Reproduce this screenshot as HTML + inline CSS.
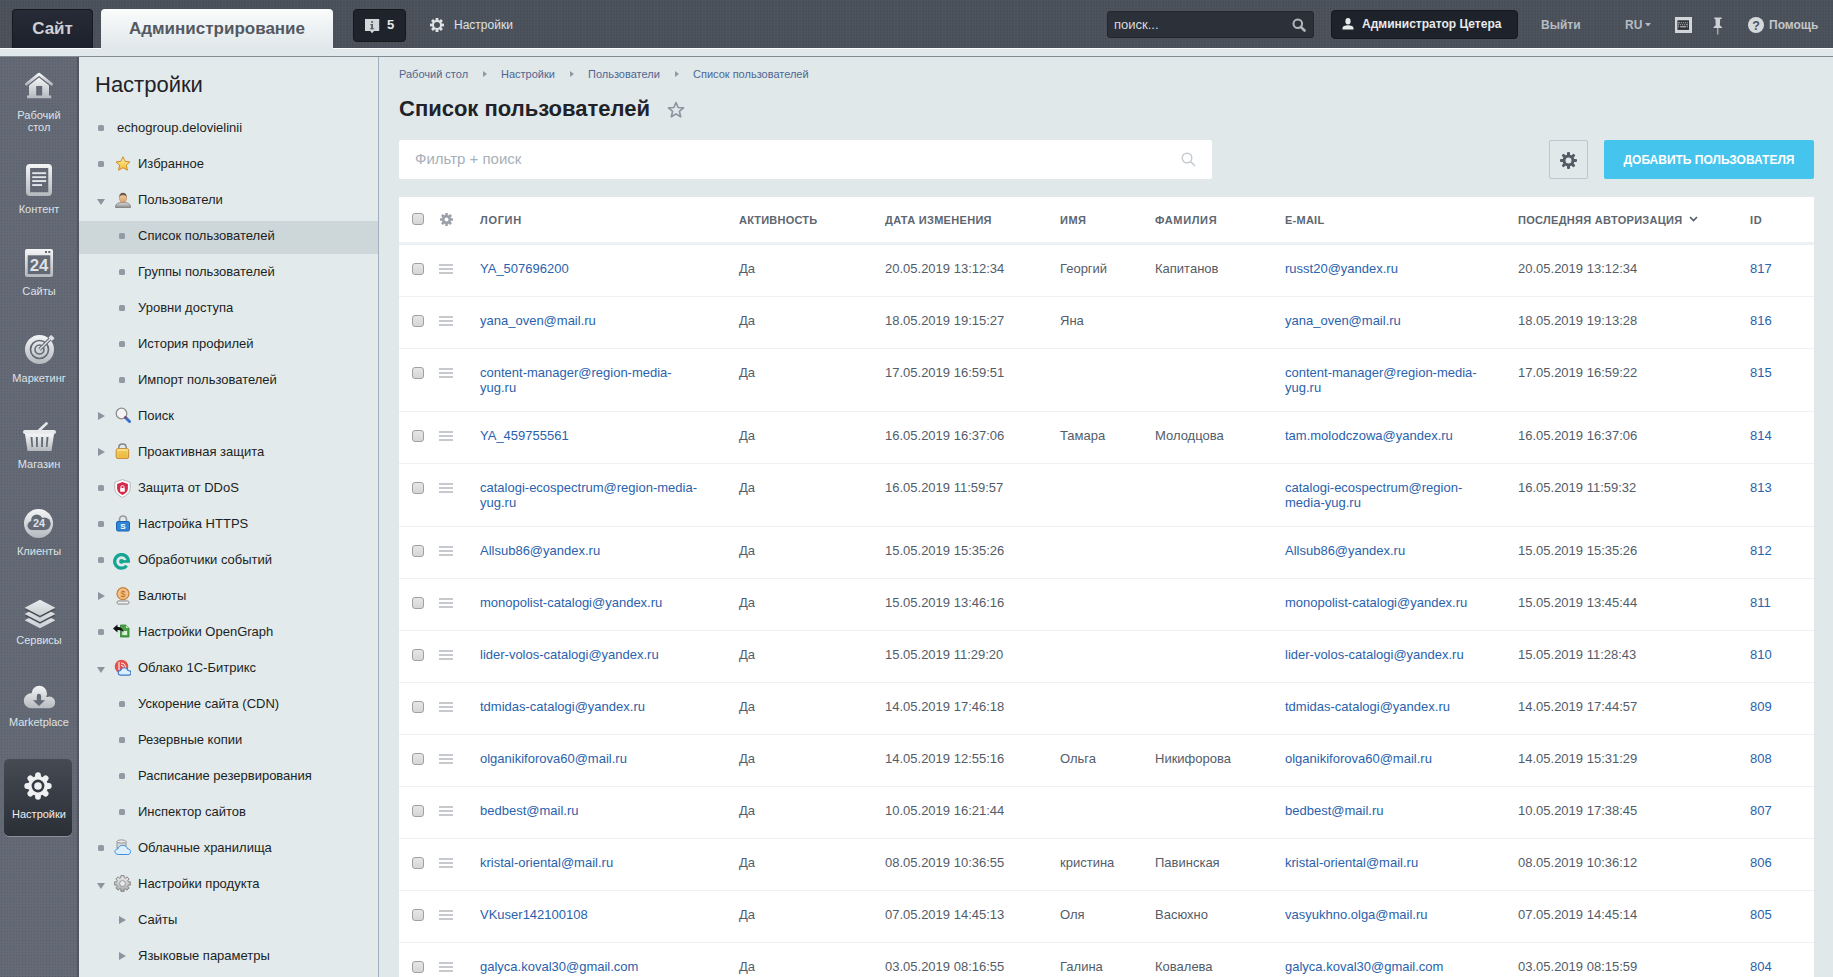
<!DOCTYPE html>
<html><head><meta charset="utf-8">
<style>
*{box-sizing:border-box;margin:0;padding:0}
html,body{width:1833px;height:977px;overflow:hidden}
body{font-family:"Liberation Sans",sans-serif;background:#dfe6e9;position:relative;color:#222}
.abs{position:absolute}
#hdr{left:0;top:0;width:1833px;height:48px;background:#4b515a;
 background-image:repeating-linear-gradient(90deg,rgba(255,255,255,.025) 0 1px,transparent 1px 3px),repeating-linear-gradient(0deg,rgba(0,0,0,.04) 0 1px,transparent 1px 3px)}
#strip{left:0;top:48px;width:1833px;height:9px;background:#e1e8eb;border-top:1px solid #fbfcfc;border-bottom:1px solid #858c91}
.btn-site{left:12px;top:9px;width:81px;height:39px;background:linear-gradient(#262b37,#1d212b);border:1px solid #16191f;border-bottom:0;border-radius:4px 4px 0 0;color:#cdd0d5;font-weight:700;font-size:17px;text-align:center;line-height:38px}
.tab-adm{left:101px;top:9px;width:232px;height:47px;background:linear-gradient(#fbfcfc,#e1e8eb 80%);border-radius:4px 4px 0 0;color:#545961;font-weight:700;font-size:17px;text-align:center;line-height:40px}
.btn-notif{left:353px;top:9px;width:53px;height:33px;background:#1f232c;border:1px solid #15181d;border-radius:4px}
.notif-n{left:387px;top:17px;color:#e8e8e8;font-weight:700;font-size:13px}
.set-txt{left:454px;top:18px;color:#dfe3e6;font-size:12px}
.search{left:1107px;top:11px;width:207px;height:27px;background:#2c3038;border:1px solid #23262c;border-radius:3px}
.search span{position:absolute;left:6px;top:5px;color:#d9dcdf;font-size:13px}
.btn-user{left:1331px;top:10px;width:187px;height:29px;background:#1e222b;border:1px solid #15181d;border-radius:4px}
.btn-user span{position:absolute;left:30px;top:6px;color:#e8eaec;font-weight:700;font-size:12px}
.hlink{color:#b7bcc2;font-weight:700;font-size:12px;top:18px}

#side{left:0;top:57px;width:79px;height:920px;background-color:#636975;box-shadow:inset -2px 0 1px rgba(0,0,0,.18);
 background-image:radial-gradient(rgba(0,0,0,.10) 0.6px,transparent 0.9px);background-size:3px 3px}
.sl{position:absolute;left:0;width:78px;text-align:center;color:#dfe3e7;font-size:11px;line-height:12px}
.sel{left:4px;top:759px;width:68px;height:77px;border-radius:5px;background:linear-gradient(#454a53,#2b2f36);box-shadow:0 1px 0 rgba(255,255,255,.25)}

#menu{left:79px;top:57px;width:300px;height:920px;background:#e2eaeb;border-right:1px solid #9fb0bf}
.mh{left:95px;top:72px;font-size:22px;color:#1f2227}
.mi{position:absolute;left:0;width:299px;height:36px;font-size:13px;color:#1c1f24}
.mi .t{position:absolute;top:10px;line-height:15px;white-space:nowrap}
.mi .b{position:absolute;width:6px;height:6px;border-radius:1.5px;background:#919ba5;top:15px}
.mi .ar{position:absolute;top:14px;width:0;height:0;border-top:4.5px solid transparent;border-bottom:4.5px solid transparent;border-left:7px solid #8b95a0}
.mi .ad{position:absolute;top:15px;width:0;height:0;border-left:4.5px solid transparent;border-right:4.5px solid transparent;border-top:6.5px solid #8b95a0;margin-top:1.5px}
.mi svg{position:absolute}
.mi.s::before{content:'';position:absolute;left:0;top:3px;width:299px;height:33px;background:#cdd6d9}

#main{left:379px;top:57px;width:1454px;height:920px;background:#e0e8ea}
.bc{position:absolute;top:68px;font-size:11px;color:#4f6691;line-height:13px;white-space:nowrap}
.bca{position:absolute;top:71px;width:0;height:0;border-top:3.5px solid transparent;border-bottom:3.5px solid transparent;border-left:4px solid #8f99a3}
.ttl{left:399px;top:96px;font-size:22px;font-weight:700;color:#1f2329;white-space:nowrap}
.flt{left:399px;top:140px;width:813px;height:39px;background:#fff;border-radius:2px}
.flt span{position:absolute;left:16px;top:10px;font-size:15px;color:#a8b0b8;line-height:17px}
.gbtn{left:1549px;top:140px;width:39px;height:39px;border:1px solid #bfc7cc;border-radius:2px}
.abtn{left:1604px;top:140px;width:210px;height:39px;background:#45c5ee;border-radius:2px;color:#fff;font-weight:700;font-size:12px;text-align:center;line-height:41px;white-space:nowrap}

.tbl{left:399px;top:197px;width:1415px;height:780px;background:#fff}
.th{position:absolute;top:214px;font-size:11px;font-weight:700;letter-spacing:.5px;color:#5d6671;line-height:13px;white-space:nowrap}
.band{left:399px;top:242px;width:1415px;height:3px;background:#edf1f3}
.row{position:absolute;left:399px;width:1415px;border-bottom:1px solid #edf1f3}
.c{position:absolute;top:16px;font-size:13px;line-height:15px;color:#535c69;white-space:nowrap}
.c.l{color:#2a62ad}
.cb{position:absolute;left:13px;width:12px;height:12px;border:1px solid #a0a0a0;border-radius:3px;background:linear-gradient(#e6e6e6,#d6d6d6)}
.hb{position:absolute;left:40px;width:14px;height:10px;border-top:2px solid #c6cacf;border-bottom:2px solid #c6cacf}
.hb::after{content:'';position:absolute;left:0;top:2px;width:14px;height:2px;background:#c6cacf}
</style></head><body>
<div id="hdr" class="abs"></div>
<div id="strip" class="abs"></div>
<div class="abs btn-site">Сайт</div>
<div class="abs tab-adm">Администрирование</div>
<div class="abs btn-notif"></div>
<svg class="abs" style="left:365px;top:19px" width="15" height="15" viewBox="0 0 15 15"><path d="M0 0H14.2V12H9L7.1 14.3L5.2 12H0Z" fill="#d3d7da"/><circle cx="7.1" cy="3" r="1" fill="#565c64"/><rect x="6.2" y="5" width="1.8" height="5.2" fill="#565c64"/><rect x="5.3" y="5" width="2" height="0.9" fill="#565c64"/><rect x="5" y="9.3" width="4.2" height="0.9" fill="#565c64"/></svg>
<div class="abs notif-n">5</div>
<svg class="abs" style="left:430px;top:18px" width="14" height="14" viewBox="0 0 14 14"><g fill="#dfe3e6"><circle cx="7" cy="7" r="5"/><g id="t"><rect x="5.6" y="0" width="2.8" height="14"/><rect x="0" y="5.6" width="14" height="2.8"/></g><use href="#t" transform="rotate(45 7 7)"/></g><circle cx="7" cy="7" r="3" fill="#4b515a"/></svg>
<div class="abs set-txt">Настройки</div>
<div class="abs search"><span>поиск...</span>
<svg style="position:absolute;left:184px;top:6px" width="14" height="14" viewBox="0 0 14 14"><circle cx="5.8" cy="5.8" r="4.3" fill="none" stroke="#b3b7bc" stroke-width="2"/><path d="M8.8 8.8L12.5 12.5" stroke="#b3b7bc" stroke-width="2.6" stroke-linecap="round"/></svg></div>
<div class="abs btn-user"><svg style="position:absolute;left:10px;top:7px" width="12" height="12" viewBox="0 0 12 12"><ellipse cx="6" cy="3.3" rx="2.6" ry="3.2" fill="#e8eaec"/><path d="M0.5 11.5V10C0.5 8.3 3 7.3 6 7.3S11.5 8.3 11.5 10V11.5Z" fill="#e8eaec"/></svg><span>Администратор Цетера</span></div>
<div class="abs hlink" style="left:1541px">Выйти</div>
<div class="abs hlink" style="left:1625px">RU</div>
<svg class="abs" style="left:1645px;top:23px" width="6" height="4" viewBox="0 0 6 4"><path d="M0 0H6L3 3.5Z" fill="#b7bcc2"/></svg>
<svg class="abs" style="left:1675px;top:17px" width="17" height="16" viewBox="0 0 17 16"><rect x="0" y="0" width="17" height="16" fill="#d3d6d9"/><rect x="2.4" y="3.3" width="11.6" height="9.6" fill="#2c3037"/><g fill="#d3d6d9"><rect x="3.2" y="5.3" width="1.6" height="1"/><rect x="5.7" y="5.3" width="1" height="1"/><rect x="7.8" y="5.3" width="1" height="1"/><rect x="9.8" y="5.3" width="1" height="1"/><rect x="11.8" y="5.3" width="1" height="1"/><rect x="3.2" y="7.3" width="1" height="1"/><rect x="5.2" y="7.3" width="1" height="1"/><rect x="7.2" y="7.3" width="1" height="1"/><rect x="9.2" y="7.3" width="1" height="1"/><rect x="11.2" y="7.3" width="1.6" height="1"/><rect x="3.2" y="9.3" width="1" height="1"/><rect x="5.2" y="9.3" width="5.8" height="1"/><rect x="11.8" y="9.3" width="1" height="1"/></g></svg>
<svg class="abs" style="left:1713px;top:17px" width="10" height="18" viewBox="0 0 10 18"><path d="M1.3 0.6H8.6V2H7.2L6.8 8.2L9 10.2V11H0.5V10.2L2.7 8.2L2.4 2H1.3Z" fill="#ced2d5"/><rect x="4.3" y="11" width="1" height="6.5" fill="#ced2d5"/></svg>
<svg class="abs" style="left:1748px;top:17px" width="16" height="16" viewBox="0 0 16 16"><circle cx="8" cy="8" r="8" fill="#d6d9dc"/><text x="8" y="12.6" text-anchor="middle" font-family="Liberation Sans" font-weight="700" font-size="12.5" fill="#4b515a">?</text></svg>
<div class="abs hlink" style="left:1769px;color:#c2c6cb">Помощь</div>

<div id="side" class="abs"></div>
<svg width="0" height="0" style="position:absolute"><defs>
<linearGradient id="ig" x1="0" y1="0" x2="0" y2="1"><stop offset="0" stop-color="#f4f5f6"/><stop offset="1" stop-color="#b4b9be"/></linearGradient>
</defs></svg>
<svg class="abs" style="left:25px;top:72px" width="28" height="27" viewBox="0 0 28 27"><path d="M1.5 12.2L14 2.2L26.5 12.2" fill="none" stroke="url(#ig)" stroke-width="2.8" stroke-linecap="round" stroke-linejoin="round"/><path d="M4 13.5L14 5.5L24 13.5V23.5H26.2V26.3H2V23.5H4ZM11.2 14V23.5H17.2V14Z" fill="url(#ig)"/></svg>
<div class="sl" style="top:109px">Рабочий<br>стол</div>
<svg class="abs" style="left:26px;top:164px" width="26" height="32" viewBox="0 0 26 32"><path fill-rule="evenodd" d="M4 0H22A4 4 0 0 1 26 4V28A4 4 0 0 1 22 32H4A4 4 0 0 1 0 28V4A4 4 0 0 1 4 0ZM4.1 4V28.3H22.3V4Z" fill="url(#ig)"/><g fill="#e2e5e8"><rect x="6.2" y="8.2" width="13.9" height="1.9"/><rect x="6.2" y="12.2" width="13.9" height="1.9"/><rect x="6.2" y="16.1" width="13.9" height="1.9"/><rect x="6.2" y="20.1" width="9.9" height="1.9"/></g></svg>
<div class="sl" style="top:203px">Контент</div>
<svg class="abs" style="left:25px;top:249px" width="28" height="28" viewBox="0 0 28 28"><rect x="0" y="0" width="28" height="28" rx="2" fill="url(#ig)"/><rect x="2.7" y="6.3" width="22.6" height="18.8" fill="#636975"/><rect x="20" y="2" width="2" height="2" fill="#636975"/><rect x="23.3" y="2" width="2" height="2" fill="#636975"/><text x="14" y="22.2" text-anchor="middle" font-family="Liberation Sans" font-weight="700" font-size="16.8" fill="#dfe2e5">24</text></svg>
<div class="sl" style="top:285px">Сайты</div>
<svg class="abs" style="left:25px;top:335px" width="30" height="30" viewBox="0 0 30 30"><circle cx="14.5" cy="14.5" r="14.5" fill="url(#ig)"/><circle cx="14.5" cy="14.5" r="9" fill="none" stroke="#636975" stroke-width="1.7"/><circle cx="14.5" cy="14.5" r="4.5" fill="none" stroke="#636975" stroke-width="1.6"/><path d="M14.5 14.5L26 3" stroke="#636975" stroke-width="3.6"/><path d="M14.5 14.5L27 2" stroke="#dde0e3" stroke-width="1.5"/><path d="M23.5 2.6L26.2 -0.1L29.6 3.3L26.9 6Z" fill="#dde0e3"/></svg>
<div class="sl" style="top:372px">Маркетинг</div>
<svg class="abs" style="left:23px;top:422px" width="33" height="30" viewBox="0 0 33 30"><path d="M16 8.5L23.5 1.5" stroke="#e6e8ea" stroke-width="2.6" stroke-linecap="round"/><rect x="0" y="8" width="33" height="4" rx="2" fill="#e8eaec"/><path d="M2 12H31L28.5 29H4.5Z" fill="url(#ig)"/><g fill="#636975"><path d="M7.5 15H9.5L10 25H8.5Z"/><path d="M12.8 15H14.8L14.9 25H13.2Z"/><path d="M18.2 15H20.2L19.8 25H18.1Z"/><path d="M23.5 15H25.5L24.5 25H23Z"/></g></svg>
<div class="sl" style="top:458px">Магазин</div>
<svg class="abs" style="left:24px;top:509px" width="29" height="29" viewBox="0 0 29 29"><circle cx="14.5" cy="14.5" r="14.5" fill="url(#ig)"/><g fill="#636975"><circle cx="8" cy="16.6" r="4.5"/><circle cx="12.8" cy="11" r="5.6"/><circle cx="20.4" cy="14.8" r="6.3"/><rect x="8" y="13" width="12.4" height="8.1"/></g><text x="15" y="18.1" text-anchor="middle" font-family="Liberation Sans" font-weight="700" font-size="10.8" fill="#dfe2e5">24</text></svg>
<div class="sl" style="top:545px">Клиенты</div>
<svg class="abs" style="left:24px;top:599px" width="32" height="31" viewBox="0 0 32 31"><defs><linearGradient id="ig2" x1="0" y1="0" x2="0" y2="1"><stop offset="0" stop-color="#e9ecee"/><stop offset="1" stop-color="#c9ced2"/></linearGradient></defs><path d="M16 0.8L31.4 8.8L16 16.8L0.6 8.8Z" transform="translate(0 12.4)" fill="url(#ig2)"/><path d="M16 0.8L31.4 8.8L16 16.8L0.6 8.8Z" transform="translate(0 7.9)" fill="#4a4f58"/><path d="M16 0.8L31.4 8.8L16 16.8L0.6 8.8Z" transform="translate(0 6.2)" fill="url(#ig2)"/><path d="M16 0.8L31.4 8.8L16 16.8L0.6 8.8Z" transform="translate(0 1.7)" fill="#4a4f58"/><path d="M16 0.8L31.4 8.8L16 16.8L0.6 8.8Z" fill="url(#ig2)"/></svg>
<div class="sl" style="top:634px">Сервисы</div>
<svg class="abs" style="left:23px;top:685px" width="33" height="24" viewBox="0 0 33 24"><defs><clipPath id="cmk"><circle cx="8.3" cy="15.7" r="7.5"/><circle cx="16.3" cy="8.4" r="7.7"/><circle cx="26.4" cy="17.4" r="5.8"/><rect x="8.3" y="12" width="18.1" height="11.2"/></clipPath></defs><rect x="0" y="0" width="33" height="24" fill="url(#ig)" clip-path="url(#cmk)"/><path d="M13.8 11A2.15 2.15 0 0 1 18.1 11V15.2H22.1L16 21L9.9 15.2H13.8Z" fill="#636975"/></svg>
<div class="sl" style="top:716px">Marketplace</div>
<div class="abs sel"></div>
<svg class="abs" style="left:24px;top:772px" width="28" height="28" viewBox="0 0 28 28"><g fill="#eef0f1"><circle cx="14" cy="14" r="10"/><g id="tooth"><rect x="11.1" y="0.3" width="5.8" height="27.4" rx="2.9"/></g><use href="#tooth" transform="rotate(45 14 14)"/><use href="#tooth" transform="rotate(90 14 14)"/><use href="#tooth" transform="rotate(135 14 14)"/></g><circle cx="14" cy="14" r="6.4" fill="#363a42"/><circle cx="14" cy="14" r="3.8" fill="#eef0f1"/></svg>
<div class="sl" style="top:808px;color:#eceef0">Настройки</div>
<div id="menu" class="abs"></div>
<div class="abs mh">Настройки</div>
<div class="mi" style="top:110px;left:79px"><i class="b" style="left:19px"></i><span class="t" style="left:38px">echogroup.delovielinii</span></div>
<div class="mi" style="top:146px;left:79px"><i class="b" style="left:19px"></i><svg style="left:36px;top:10px" width="16" height="16" viewBox="0 0 16 16"><defs><linearGradient id="gs" x1="0" y1="0" x2="0" y2="1"><stop offset="0" stop-color="#fff3a8"/><stop offset="1" stop-color="#f2b92c"/></linearGradient></defs><path d="M8 0.8L10.1 5.3L15 5.9L11.4 9.2L12.4 14.2L8 11.7L3.6 14.2L4.6 9.2L1 5.9L5.9 5.3Z" fill="url(#gs)" stroke="#d08a2a" stroke-width="1"/></svg><span class="t" style="left:59px">Избранное</span></div>
<div class="mi" style="top:182px;left:79px"><i class="ad" style="left:18px"></i><svg style="left:36px;top:10px" width="16" height="16" viewBox="0 0 16 16"><defs><linearGradient id="gu" x1="0" y1="0" x2="0" y2="1"><stop offset="0" stop-color="#f6d2a6"/><stop offset="1" stop-color="#d9a06c"/></linearGradient><linearGradient id="gb" x1="0" y1="0" x2="0" y2="1"><stop offset="0" stop-color="#dcdcdc"/><stop offset="1" stop-color="#8d8d8d"/></linearGradient></defs><path d="M0.5 15.5C0.5 11.5 3 10.5 8 10.5S15.5 11.5 15.5 15.5Z" fill="url(#gb)" stroke="#7b7b7b" stroke-width="0.8"/><ellipse cx="8" cy="6" rx="3.6" ry="4.6" fill="url(#gu)" stroke="#b5855a" stroke-width="0.6"/><path d="M4.3 5C4.3 2 6 0.8 8 0.8S11.7 2 11.7 5C11 3.5 9.5 3.2 8 3.2S5 3.5 4.3 5Z" fill="#6b5b4b"/></svg><span class="t" style="left:59px">Пользователи</span></div>
<div class="mi s" style="top:218px;left:79px"><i class="b" style="left:40px"></i><span class="t" style="left:59px">Список пользователей</span></div>
<div class="mi" style="top:254px;left:79px"><i class="b" style="left:40px"></i><span class="t" style="left:59px">Группы пользователей</span></div>
<div class="mi" style="top:290px;left:79px"><i class="b" style="left:40px"></i><span class="t" style="left:59px">Уровни доступа</span></div>
<div class="mi" style="top:326px;left:79px"><i class="b" style="left:40px"></i><span class="t" style="left:59px">История профилей</span></div>
<div class="mi" style="top:362px;left:79px"><i class="b" style="left:40px"></i><span class="t" style="left:59px">Импорт пользователей</span></div>
<div class="mi" style="top:398px;left:79px"><i class="ar" style="left:19px"></i><svg style="left:36px;top:9px" width="16" height="16" viewBox="0 0 16 16"><circle cx="6.5" cy="6.5" r="5.3" fill="#f4f4f4" stroke="#8e8e8e" stroke-width="1.3"/><path d="M10.5 10.5L14.5 14.5" stroke="#3b6fc9" stroke-width="3" stroke-linecap="round"/><path d="M9.8 9.8L11 11" stroke="#c03030" stroke-width="2.5"/></svg><span class="t" style="left:59px">Поиск</span></div>
<div class="mi" style="top:434px;left:79px"><i class="ar" style="left:19px"></i><svg style="left:36px;top:9px" width="16" height="16" viewBox="0 0 16 16"><path d="M3.8 6V4.5C3.8 2.2 5.3 0.9 7.5 0.9S11.2 2.2 11.2 4.5V6" fill="none" stroke="#858585" stroke-width="1.5"/><defs><linearGradient id="gl" x1="0" y1="0" x2="0" y2="1"><stop offset="0" stop-color="#fff6c8"/><stop offset="0.25" stop-color="#f6d45a"/><stop offset="1" stop-color="#eebd45"/></linearGradient></defs><rect x="1.2" y="5.6" width="12.5" height="10" rx="1.8" fill="url(#gl)" stroke="#c7872e" stroke-width="1"/><g stroke="#dba23c" stroke-width="0.6" opacity="0.8"><path d="M3 9H12M3 11H12M3 13H12"/></g></svg><span class="t" style="left:59px">Проактивная защита</span></div>
<div class="mi" style="top:470px;left:79px"><i class="b" style="left:19px"></i><svg style="left:35px;top:9px" width="17" height="19" viewBox="0 0 17 19"><path d="M8.5 0.6L16.2 3.3V9.3C16.2 13.6 12.6 16.5 8.5 18.4C4.4 16.5 0.8 13.6 0.8 9.3V3.3Z" fill="#fff" stroke="#b5b5b5" stroke-width="1"/><path d="M8.5 3L13.9 5V9.4C13.9 12.4 11.5 14.6 8.5 15.9C5.5 14.6 3.1 12.4 3.1 9.4V5Z" fill="#d42a4c"/><path d="M7 9V8C7 7.1 7.6 6.5 8.5 6.5S10 7.1 10 8V9" fill="none" stroke="#fff" stroke-width="1"/><rect x="6.2" y="9" width="4.6" height="3.8" rx="0.6" fill="#fff"/></svg><span class="t" style="left:59px">Защита от DDoS</span></div>
<div class="mi" style="top:506px;left:79px"><i class="b" style="left:19px"></i><svg style="left:36px;top:9px" width="16" height="17" viewBox="0 0 16 17"><path d="M4.5 7V4.8C4.5 2.5 6 1 8 1S11.5 2.5 11.5 4.8V7" fill="none" stroke="#9a9a9a" stroke-width="1.6"/><rect x="1.5" y="6.5" width="13" height="9.5" rx="1.5" fill="#2f86d6" stroke="#1f63b0" stroke-width="1"/><text x="8" y="14.3" text-anchor="middle" font-family="Liberation Sans" font-weight="700" font-size="8" fill="#fff">S</text></svg><span class="t" style="left:59px">Настройка HTTPS</span></div>
<div class="mi" style="top:542px;left:79px"><i class="b" style="left:19px"></i><svg style="left:34px;top:11px" width="18" height="18" viewBox="0 0 18 18"><path d="M13.71 12.77A6.8 6.8 0 1 1 15.3 8.4" fill="none" stroke="#17a593" stroke-width="3.3"/><rect x="8.5" y="7.1" width="8.4" height="2.7" fill="#17a593"/><circle cx="8.5" cy="8.45" r="2.4" fill="#17a593"/></svg><span class="t" style="left:59px">Обработчики событий</span></div>
<div class="mi" style="top:578px;left:79px"><i class="ar" style="left:19px"></i><svg style="left:37px;top:9px" width="14" height="18" viewBox="0 0 14 18"><circle cx="7" cy="6.7" r="6" fill="#f3c08a" stroke="#c5813f" stroke-width="1.2"/><text x="7" y="10.3" text-anchor="middle" font-family="Liberation Sans" font-size="9" fill="#b0702d">$</text><rect x="1" y="14" width="12" height="3" rx="1.5" fill="#f2f2f2" stroke="#777" stroke-width="0.9"/></svg><span class="t" style="left:59px">Валюты</span></div>
<div class="mi" style="top:614px;left:79px"><i class="b" style="left:19px"></i><svg style="left:34px;top:9px" width="17" height="16" viewBox="0 0 17 16"><path d="M7.5 2H13L16 5V14H7.5Z" fill="#47a447" stroke="#2e7d2e" stroke-width="0.8"/><path d="M13 2V5H16" fill="#bfe3bf"/><rect x="9.3" y="8" width="4.8" height="4" fill="#d9f0d9"/><path d="M0 5.5L4.5 1.5V4C8 4 10.5 6 10.5 9.5C9.5 7.7 7.5 7 4.5 7V9.5Z" fill="#111"/></svg><span class="t" style="left:59px">Настройки OpenGraph</span></div>
<div class="mi" style="top:650px;left:79px"><i class="ad" style="left:18px"></i><svg style="left:35px;top:9px" width="17" height="18" viewBox="0 0 17 18"><circle cx="7.5" cy="7.5" r="6.8" fill="#e4524e"/><g fill="none" stroke="#fff" stroke-width="1"><path d="M5 3V11"/><path d="M7 4C10 4 11.5 6 11.5 9"/><path d="M7 6.5C8.8 6.5 9.5 7.5 9.5 9"/></g><path d="M6 17C4 17 3.2 15.8 3.2 14.6C3.2 13.3 4.2 12.4 5.5 12.4C6 10.6 7.4 9.6 9.3 9.6C11.2 9.6 12.6 10.8 13 12.4C14.8 12.4 16 13.5 16 14.8C16 16.1 15 17 13.6 17Z" transform="translate(1 -0.9)" fill="#dcefff" stroke="#3a78c8" stroke-width="1.1"/></svg><span class="t" style="left:59px">Облако 1С-Битрикс</span></div>
<div class="mi" style="top:686px;left:79px"><i class="b" style="left:40px"></i><span class="t" style="left:59px">Ускорение сайта (CDN)</span></div>
<div class="mi" style="top:722px;left:79px"><i class="b" style="left:40px"></i><span class="t" style="left:59px">Резервные копии</span></div>
<div class="mi" style="top:758px;left:79px"><i class="b" style="left:40px"></i><span class="t" style="left:59px">Расписание резервирования</span></div>
<div class="mi" style="top:794px;left:79px"><i class="b" style="left:40px"></i><span class="t" style="left:59px">Инспектор сайтов</span></div>
<div class="mi" style="top:830px;left:79px"><i class="b" style="left:19px"></i><svg style="left:35px;top:9px" width="17" height="17" viewBox="0 0 17 17"><path d="M3 2.5H12V9H3Z" fill="#d8d8d8" stroke="#8a8a8a" stroke-width="0.9"/><ellipse cx="7.5" cy="2.5" rx="4.5" ry="1.6" fill="#eee" stroke="#8a8a8a" stroke-width="0.9"/><path d="M4.5 15.5C2 15.5 1 14 1 12.6C1 11 2.3 9.8 4 9.8C4.6 7.5 6.5 6.3 8.8 6.3C11.2 6.3 13 7.8 13.5 9.8C15.5 9.8 16.6 11.2 16.6 12.7C16.6 14.2 15.4 15.5 13.8 15.5Z" fill="#dcefff" stroke="#3b8ee0" stroke-width="1"/></svg><span class="t" style="left:59px">Облачные хранилища</span></div>
<div class="mi" style="top:866px;left:79px"><i class="ad" style="left:18px"></i><svg style="left:35px;top:9px" width="17" height="17" viewBox="0 0 17 17"><defs><linearGradient id="gg" x1="0" y1="0" x2="0" y2="1"><stop offset="0" stop-color="#ececec"/><stop offset="1" stop-color="#a9a9a9"/></linearGradient></defs><path d="M6.99 2.59 L6.83 0.68 L10.17 0.68 L10.01 2.59 L10.83 2.86 L11.61 3.25 L12.85 1.79 L15.21 4.15 L13.75 5.39 L14.14 6.17 L14.41 6.99 L16.32 6.83 L16.32 10.17 L14.41 10.01 L14.14 10.83 L13.75 11.61 L15.21 12.85 L12.85 15.21 L11.61 13.75 L10.83 14.14 L10.01 14.41 L10.17 16.32 L6.83 16.32 L6.99 14.41 L6.17 14.14 L5.39 13.75 L4.15 15.21 L1.79 12.85 L3.25 11.61 L2.86 10.83 L2.59 10.01 L0.68 10.17 L0.68 6.83 L2.59 6.99 L2.86 6.17 L3.25 5.39 L1.79 4.15 L4.15 1.79 L5.39 3.25 L6.17 2.86Z" fill="url(#gg)" stroke="#7b7b7b" stroke-width="0.9" stroke-linejoin="round"/><circle cx="8.5" cy="8.5" r="2.9" fill="#e6eced" stroke="#8a8a8a" stroke-width="0.8"/></svg><span class="t" style="left:59px">Настройки продукта</span></div>
<div class="mi" style="top:902px;left:79px"><i class="ar" style="left:40px"></i><span class="t" style="left:59px">Сайты</span></div>
<div class="mi" style="top:938px;left:79px"><i class="ar" style="left:40px"></i><span class="t" style="left:59px">Языковые параметры</span></div>

<div id="main" class="abs"></div>
<div class="bc" style="left:399px">Рабочий стол</div><i class="bca" style="left:483px"></i>
<div class="bc" style="left:501px">Настройки</div><i class="bca" style="left:570px"></i>
<div class="bc" style="left:588px">Пользователи</div><i class="bca" style="left:675px"></i>
<div class="bc" style="left:693px">Список пользователей</div>
<div class="abs ttl">Список пользователей</div>
<svg class="abs" style="left:667px;top:101px" width="18" height="18" viewBox="0 0 18 18"><path d="M9 1.5L11.1 6.5L16.5 6.9L12.4 10.4L13.7 15.8L9 12.9L4.3 15.8L5.6 10.4L1.5 6.9L6.9 6.5Z" fill="none" stroke="#8a949d" stroke-width="1.6" stroke-linejoin="round"/></svg>
<div class="abs flt"><span>Фильтр + поиск</span>
<svg style="position:absolute;left:782px;top:12px" width="15" height="15" viewBox="0 0 15 15"><circle cx="6" cy="6" r="4.8" fill="none" stroke="#c4cacf" stroke-width="1.4"/><path d="M9.5 9.5L13.5 13.5" stroke="#c4cacf" stroke-width="1.6" stroke-linecap="round"/></svg></div>
<div class="abs gbtn"><svg style="position:absolute;left:10px;top:11px" width="17" height="17" viewBox="0 0 16 16"><g fill="#535b66"><circle cx="8" cy="8" r="5.6"/><g id="gt2"><rect x="6.6" y="0" width="2.8" height="16" rx="1"/></g><use href="#gt2" transform="rotate(45 8 8)"/><use href="#gt2" transform="rotate(90 8 8)"/><use href="#gt2" transform="rotate(135 8 8)"/></g><circle cx="8" cy="8" r="2.8" fill="#e0e8ea"/></svg></div>
<div class="abs abtn">ДОБАВИТЬ ПОЛЬЗОВАТЕЛЯ</div>

<div class="abs tbl"></div>
<div class="cb" style="left:412px;top:213px"></div>
<svg class="abs" style="left:440px;top:213px" width="13" height="13" viewBox="0 0 13 13"><g fill="#9aa1a8"><circle cx="6.5" cy="6.5" r="4.6"/><g id="gt3"><rect x="5.2" y="0" width="2.6" height="13" rx="0.5"/></g><use href="#gt3" transform="rotate(45 6.5 6.5)"/><use href="#gt3" transform="rotate(90 6.5 6.5)"/><use href="#gt3" transform="rotate(135 6.5 6.5)"/></g><circle cx="6.5" cy="6.5" r="2" fill="#fff"/></svg>
<div class="th" style="left:480px;letter-spacing:0.7px">ЛОГИН</div>
<div class="th" style="left:739px;letter-spacing:0.2px">АКТИВНОСТЬ</div>
<div class="th" style="left:885px;letter-spacing:0.3px">ДАТА ИЗМЕНЕНИЯ</div>
<div class="th" style="left:1060px;letter-spacing:0.5px">ИМЯ</div>
<div class="th" style="left:1155px;letter-spacing:0.65px">ФАМИЛИЯ</div>
<div class="th" style="left:1285px;letter-spacing:0.25px">E-MAIL</div>
<div class="th" style="left:1518px;letter-spacing:0.3px">ПОСЛЕДНЯЯ АВТОРИЗАЦИЯ</div>
<svg class="abs" style="left:1689px;top:216px" width="9" height="6" viewBox="0 0 9 6"><path d="M1 1L4.5 4.5L8 1" fill="none" stroke="#535c69" stroke-width="1.6"/></svg>
<div class="th" style="left:1750px;letter-spacing:0.6px">ID</div>
<div class="abs band"></div>
<div class="row" style="top:245px;height:52px"><i class="cb" style="top:18px"></i><i class="hb" style="top:19px"></i><span class="c l" style="left:81px">YA_507696200</span><span class="c" style="left:340px">Да</span><span class="c" style="left:486px">20.05.2019 13:12:34</span><span class="c" style="left:661px">Георгий</span><span class="c" style="left:756px">Капитанов</span><span class="c l" style="left:886px">russt20@yandex.ru</span><span class="c" style="left:1119px">20.05.2019 13:12:34</span><span class="c l" style="left:1351px">817</span></div>
<div class="row" style="top:297px;height:52px"><i class="cb" style="top:18px"></i><i class="hb" style="top:19px"></i><span class="c l" style="left:81px">yana_oven@mail.ru</span><span class="c" style="left:340px">Да</span><span class="c" style="left:486px">18.05.2019 19:15:27</span><span class="c" style="left:661px">Яна</span><span class="c l" style="left:886px">yana_oven@mail.ru</span><span class="c" style="left:1119px">18.05.2019 19:13:28</span><span class="c l" style="left:1351px">816</span></div>
<div class="row" style="top:349px;height:63px"><i class="cb" style="top:18px"></i><i class="hb" style="top:19px"></i><span class="c l" style="left:81px">content-manager@region-media-<br>yug.ru</span><span class="c" style="left:340px">Да</span><span class="c" style="left:486px">17.05.2019 16:59:51</span><span class="c l" style="left:886px">content-manager@region-media-<br>yug.ru</span><span class="c" style="left:1119px">17.05.2019 16:59:22</span><span class="c l" style="left:1351px">815</span></div>
<div class="row" style="top:412px;height:52px"><i class="cb" style="top:18px"></i><i class="hb" style="top:19px"></i><span class="c l" style="left:81px">YA_459755561</span><span class="c" style="left:340px">Да</span><span class="c" style="left:486px">16.05.2019 16:37:06</span><span class="c" style="left:661px">Тамара</span><span class="c" style="left:756px">Молодцова</span><span class="c l" style="left:886px">tam.molodczowa@yandex.ru</span><span class="c" style="left:1119px">16.05.2019 16:37:06</span><span class="c l" style="left:1351px">814</span></div>
<div class="row" style="top:464px;height:63px"><i class="cb" style="top:18px"></i><i class="hb" style="top:19px"></i><span class="c l" style="left:81px">catalogi-ecospectrum@region-media-<br>yug.ru</span><span class="c" style="left:340px">Да</span><span class="c" style="left:486px">16.05.2019 11:59:57</span><span class="c l" style="left:886px">catalogi-ecospectrum@region-<br>media-yug.ru</span><span class="c" style="left:1119px">16.05.2019 11:59:32</span><span class="c l" style="left:1351px">813</span></div>
<div class="row" style="top:527px;height:52px"><i class="cb" style="top:18px"></i><i class="hb" style="top:19px"></i><span class="c l" style="left:81px">Allsub86@yandex.ru</span><span class="c" style="left:340px">Да</span><span class="c" style="left:486px">15.05.2019 15:35:26</span><span class="c l" style="left:886px">Allsub86@yandex.ru</span><span class="c" style="left:1119px">15.05.2019 15:35:26</span><span class="c l" style="left:1351px">812</span></div>
<div class="row" style="top:579px;height:52px"><i class="cb" style="top:18px"></i><i class="hb" style="top:19px"></i><span class="c l" style="left:81px">monopolist-catalogi@yandex.ru</span><span class="c" style="left:340px">Да</span><span class="c" style="left:486px">15.05.2019 13:46:16</span><span class="c l" style="left:886px">monopolist-catalogi@yandex.ru</span><span class="c" style="left:1119px">15.05.2019 13:45:44</span><span class="c l" style="left:1351px">811</span></div>
<div class="row" style="top:631px;height:52px"><i class="cb" style="top:18px"></i><i class="hb" style="top:19px"></i><span class="c l" style="left:81px">lider-volos-catalogi@yandex.ru</span><span class="c" style="left:340px">Да</span><span class="c" style="left:486px">15.05.2019 11:29:20</span><span class="c l" style="left:886px">lider-volos-catalogi@yandex.ru</span><span class="c" style="left:1119px">15.05.2019 11:28:43</span><span class="c l" style="left:1351px">810</span></div>
<div class="row" style="top:683px;height:52px"><i class="cb" style="top:18px"></i><i class="hb" style="top:19px"></i><span class="c l" style="left:81px">tdmidas-catalogi@yandex.ru</span><span class="c" style="left:340px">Да</span><span class="c" style="left:486px">14.05.2019 17:46:18</span><span class="c l" style="left:886px">tdmidas-catalogi@yandex.ru</span><span class="c" style="left:1119px">14.05.2019 17:44:57</span><span class="c l" style="left:1351px">809</span></div>
<div class="row" style="top:735px;height:52px"><i class="cb" style="top:18px"></i><i class="hb" style="top:19px"></i><span class="c l" style="left:81px">olganikiforova60@mail.ru</span><span class="c" style="left:340px">Да</span><span class="c" style="left:486px">14.05.2019 12:55:16</span><span class="c" style="left:661px">Ольга</span><span class="c" style="left:756px">Никифорова</span><span class="c l" style="left:886px">olganikiforova60@mail.ru</span><span class="c" style="left:1119px">14.05.2019 15:31:29</span><span class="c l" style="left:1351px">808</span></div>
<div class="row" style="top:787px;height:52px"><i class="cb" style="top:18px"></i><i class="hb" style="top:19px"></i><span class="c l" style="left:81px">bedbest@mail.ru</span><span class="c" style="left:340px">Да</span><span class="c" style="left:486px">10.05.2019 16:21:44</span><span class="c l" style="left:886px">bedbest@mail.ru</span><span class="c" style="left:1119px">10.05.2019 17:38:45</span><span class="c l" style="left:1351px">807</span></div>
<div class="row" style="top:839px;height:52px"><i class="cb" style="top:18px"></i><i class="hb" style="top:19px"></i><span class="c l" style="left:81px">kristal-oriental@mail.ru</span><span class="c" style="left:340px">Да</span><span class="c" style="left:486px">08.05.2019 10:36:55</span><span class="c" style="left:661px">кристина</span><span class="c" style="left:756px">Павинская</span><span class="c l" style="left:886px">kristal-oriental@mail.ru</span><span class="c" style="left:1119px">08.05.2019 10:36:12</span><span class="c l" style="left:1351px">806</span></div>
<div class="row" style="top:891px;height:52px"><i class="cb" style="top:18px"></i><i class="hb" style="top:19px"></i><span class="c l" style="left:81px">VKuser142100108</span><span class="c" style="left:340px">Да</span><span class="c" style="left:486px">07.05.2019 14:45:13</span><span class="c" style="left:661px">Оля</span><span class="c" style="left:756px">Васюхно</span><span class="c l" style="left:886px">vasyukhno.olga@mail.ru</span><span class="c" style="left:1119px">07.05.2019 14:45:14</span><span class="c l" style="left:1351px">805</span></div>
<div class="row" style="top:943px;height:52px"><i class="cb" style="top:18px"></i><i class="hb" style="top:19px"></i><span class="c l" style="left:81px">galyca.koval30@gmail.com</span><span class="c" style="left:340px">Да</span><span class="c" style="left:486px">03.05.2019 08:16:55</span><span class="c" style="left:661px">Галина</span><span class="c" style="left:756px">Ковалева</span><span class="c l" style="left:886px">galyca.koval30@gmail.com</span><span class="c" style="left:1119px">03.05.2019 08:15:59</span><span class="c l" style="left:1351px">804</span></div>
</body></html>
